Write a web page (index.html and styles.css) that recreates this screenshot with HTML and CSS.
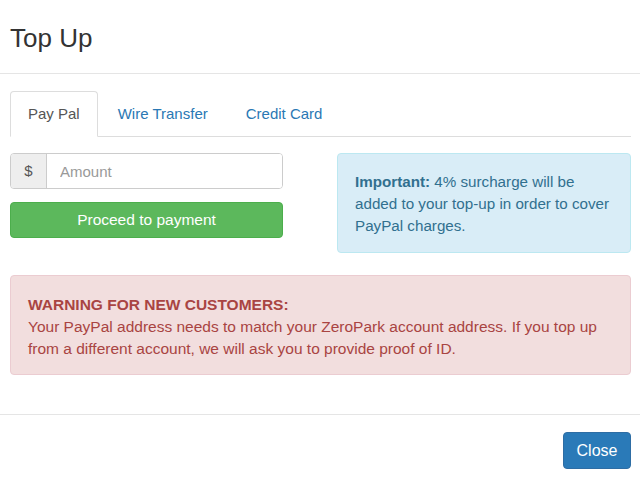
FILE: index.html
```html
<!DOCTYPE html>
<html>
<head>
<meta charset="utf-8">
<link rel="stylesheet" href="styles.css">
</head>
<body>
<div class="modal">
  <div class="modal-header">
    <h4 class="modal-title">Top Up</h4>
  </div>
  <div class="modal-body">
    <ul class="tabs">
      <li class="tab active"><a>Pay Pal</a></li>
      <li class="tab"><a>Wire Transfer</a></li>
      <li class="tab"><a>Credit Card</a></li>
    </ul>
    <div class="pane">
      <div class="row">
        <div class="col-form">
          <div class="input-group">
            <span class="addon">$</span>
            <input class="amount" type="text" placeholder="Amount">
          </div>
          <button class="btn btn-success">Proceed to payment</button>
        </div>
        <div class="alert alert-info">
          <p class="alert-text"><strong>Important:</strong> 4% surcharge will be added to your top-up in order to cover PayPal charges.</p>
        </div>
      </div>
      <div class="alert alert-danger">
        <p class="alert-title">WARNING FOR NEW CUSTOMERS:</p>
        <p class="alert-text">Your PayPal address needs to match your ZeroPark account address. If you top up from a different account, we will ask you to provide proof of ID.</p>
      </div>
    </div>
  </div>
  <div class="modal-footer">
    <button class="btn btn-primary">Close</button>
  </div>
</div>
</body>
</html>
```
FILE: styles.css
```css
* { box-sizing: border-box; }
html, body { margin: 0; padding: 0; background: #fff; }
body {
  font-family: "Liberation Sans", Arial, sans-serif;
  font-size: 15px;
  line-height: 22px;
  color: #333;
}
.modal { width: 640px; }
.modal-header {
  height: 74px;
  border-bottom: 1px solid #e5e5e5;
  padding: 22px 10px 0;
}
.modal-title {
  margin: 0;
  font-size: 26px;
  font-weight: normal;
  line-height: 32px;
  color: #333;
}
.modal-body { padding: 17px 9px 0 10px; }
.tabs {
  list-style: none;
  margin: 0;
  padding: 0;
  display: flex;
  border-bottom: 1px solid #ddd;
  height: 46px;
}
.tab { margin-right: 2px; margin-bottom: -1px; }
.tab a {
  display: block;
  height: 46px;
  padding: 11px 17px 0;
  font-size: 15px;
  color: #2a78b4;
  border: 1px solid transparent;
  border-radius: 4px 4px 0 0;
}
.tab.active a {
  color: #555;
  background: #fff;
  border-color: #ddd #ddd transparent;
}
.pane { padding-top: 16px; }
.row {
  display: flex;
  justify-content: space-between;
  align-items: flex-start;
}
.col-form { width: 273px; }
.input-group {
  display: flex;
  height: 36px;
  border: 1px solid #ccc;
  border-radius: 4px;
  overflow: hidden;
}
.addon {
  width: 36px;
  background: #eee;
  border-right: 1px solid #ccc;
  color: #555;
  text-align: center;
  line-height: 34px;
  font-size: 15px;
}
.amount {
  flex: 1;
  border: 0;
  outline: 0;
  padding: 0 13px;
  font-family: inherit;
  font-size: 15px;
  color: #555;
  min-width: 0;
}
.amount::placeholder { color: #999; }
.btn {
  display: block;
  font-family: inherit;
  border-radius: 4px;
  border: 1px solid transparent;
  color: #fff;
  cursor: pointer;
}
.btn-success {
  width: 273px;
  height: 36px;
  margin-top: 13px;
  background: #5cb85c;
  border-color: #4cae4c;
  font-size: 15.5px;
}
.alert {
  border: 1px solid transparent;
  border-radius: 4px;
}
.alert-text, .alert-title { margin: 0; }
.alert-title { font-weight: bold; }
.alert-info {
  width: 294px;
  height: 100px;
  padding: 17px 17px 0 17px;
  background: #d9edf7;
  border-color: #bce8f1;
  color: #31708f;
  font-size: 15.2px;
}
.alert-danger {
  margin-top: 22px;
  height: 100px;
  padding: 18px 17px 0 17px;
  background: #f2dede;
  border-color: #ebccd1;
  color: #a94442;
  font-size: 15.5px;
}
.modal-footer {
  margin-top: 39px;
  border-top: 1px solid #e5e5e5;
  padding: 17px 9px 0 10px;
  display: flex;
  justify-content: flex-end;
}
.btn-primary {
  width: 68px;
  height: 37px;
  background: #2a7ab8;
  border-color: #2e6da4;
  font-size: 16px;
}
```
